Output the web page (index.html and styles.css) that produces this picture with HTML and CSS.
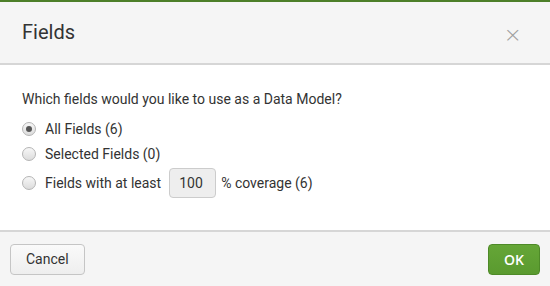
FILE: index.html
```html
<!DOCTYPE html>
<html>
<head>
<meta charset="utf-8">
<link rel="stylesheet" href="styles.css">
</head>
<body>
<div class="modal">
  <div class="modal-header">
    <h3 class="modal-title">Fields</h3>
    <span class="close">&times;</span>
  </div>
  <div class="modal-body">
    <p class="question">Which fields would you like to use as a Data Model?</p>
    <label class="option"><span class="radio checked"></span>All Fields (6)</label>
    <label class="option"><span class="radio"></span>Selected Fields (0)</label>
    <label class="option option-input"><span class="radio"></span>Fields with at least <span class="num">100</span> % coverage (6)</label>
  </div>
  <div class="modal-footer">
    <button class="btn">Cancel</button>
    <button class="btn btn-primary">OK</button>
  </div>
</div>
</body>
</html>
```
FILE: styles.css
```css
html, body {
  margin: 0;
  padding: 0;
  background: #ffffff;
}
body {
  font-family: Roboto, "Liberation Sans", sans-serif;
  color: #333333;
  width: 550px;
  height: 286px;
  overflow: hidden;
}
.modal {
  display: flex;
  flex-direction: column;
  height: 286px;
  border-top: 2px solid #4d7f29;
  box-sizing: border-box;
}
.modal-header {
  height: 61px;
  background: #f5f5f5;
  border-bottom: 2px solid #d6d6d6;
  display: flex;
  align-items: center;
  justify-content: space-between;
  padding: 0 28px 0 22px;
  flex: none;
}
.modal-title {
  margin: 0;
  font-size: 20px;
  font-weight: 400;
  color: #333;
  position: relative;
  top: -1px;
}
.close {
  font-family: "DejaVu Sans", sans-serif;
  font-size: 22px;
  font-weight: 300;
  color: #a0a0a0;
  line-height: 1;
  position: relative;
  top: 2px;
}
.modal-body {
  flex: 1;
  padding: 25px 22px 0 22px;
  display: flex;
  flex-direction: column;
}
.question {
  margin: 0 0 8px 0;
  font-size: 14px;
  line-height: 18px;
}
.option {
  display: flex;
  align-items: center;
  font-size: 14px;
  height: 25px;
}
.option-input {
  height: 34px;
}
.radio {
  width: 12px;
  height: 12px;
  border-radius: 50%;
  border: 1px solid #b5b5b5;
  background: linear-gradient(#f7f7f7, #dcdcdc);
  margin-right: 9px;
  box-sizing: content-box;
  display: flex;
  align-items: center;
  justify-content: center;
  flex: none;
}
.radio.checked::after {
  content: "";
  width: 6px;
  height: 6px;
  border-radius: 50%;
  background: #555;
}
.num {
  display: inline-flex;
  align-items: center;
  width: 36px;
  height: 28px;
  padding-left: 9px;
  margin: 0 5px 0 8px;
  background: #eeeeee;
  border: 1px solid #cccccc;
  border-radius: 4px;
  color: #333;
}
.modal-footer {
  flex: none;
  height: 54px;
  background: #f5f5f5;
  border-top: 2px solid #d6d6d6;
  display: flex;
  align-items: center;
  justify-content: space-between;
  padding: 0 10px;
}
.btn {
  font-family: Roboto, "Liberation Sans", sans-serif;
  font-size: 14px;
  color: #333;
  height: 31px;
  padding: 0 15px;
  border: 1px solid #c5c5c5;
  border-radius: 4px;
  background: linear-gradient(#fafafa, #eeeeee);
}
.btn-primary {
  font-family: "Open Sans", sans-serif;
  font-weight: 600;
  font-size: 14px;
  color: #ffffff;
  background: linear-gradient(#65a637, #5a9a2f);
  border-color: #4e8a28;
  width: 52px;
  padding: 0;
}
```
